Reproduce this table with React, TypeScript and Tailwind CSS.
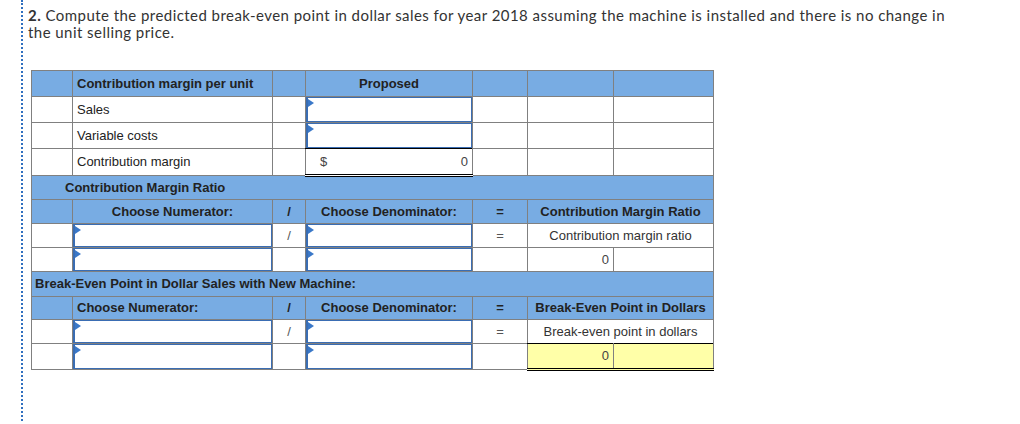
import type { ReactNode } from "react";

const cell = "border border-[#808080] p-0 align-middle";
const head = "bg-[#78ace3]";

function Entry() {
  return (
    <div className="relative h-full w-full border border-l-2 border-[#3a6db3] bg-white">
      <span className="absolute left-0 top-[1px] h-0 w-0 border-y-[4px] border-l-[6px] border-y-transparent border-l-[#3a78c8]" />
    </div>
  );
}

function Td({
  children,
  className = "",
  colSpan,
}: {
  children?: ReactNode;
  className?: string;
  colSpan?: number;
}) {
  return (
    <td colSpan={colSpan} className={`${cell} ${className}`}>
      {children}
    </td>
  );
}

export default function App() {
  return (
    <div className="h-[424px] bg-white pl-[21px] font-['Liberation_Sans',Arial,sans-serif] text-[13px] text-[#222]">
      <div className="h-[421px] border-l-2 border-dotted border-[#2f6fbf] pl-[5px]">
        <p className="whitespace-nowrap pt-[7px] font-['Lato',sans-serif] text-[15px] leading-[17px] tracking-[0.45px] text-[#333]">
          <b>2.</b> Compute the predicted break-even point in dollar sales for year 2018 assuming the machine is installed and there is no change in
          <br />
          the unit selling price.
        </p>

        <table className="ml-[3px] mt-[29px] table-fixed border-collapse">
          <colgroup>
            <col className="w-[41px]" />
            <col className="w-[200px]" />
            <col className="w-[33px]" />
            <col className="w-[167px]" />
            <col className="w-[55px]" />
            <col className="w-[86px]" />
            <col className="w-[100px]" />
          </colgroup>
          <tbody>
            <tr className={`h-[26px] ${head}`}>
              <Td />
              <Td className="px-[4px] font-bold">Contribution margin per unit</Td>
              <Td />
              <Td className="text-center font-bold">Proposed</Td>
              <Td />
              <Td />
              <Td />
            </tr>
            <tr className="h-[26px]">
              <Td />
              <Td className="px-[4px]">Sales</Td>
              <Td />
              <Td className="h-[26px]"><Entry /></Td>
              <Td />
              <Td />
              <Td />
            </tr>
            <tr className="h-[26px]">
              <Td />
              <Td className="px-[4px]">Variable costs</Td>
              <Td />
              <Td className="h-[26px]"><Entry /></Td>
              <Td />
              <Td />
              <Td />
            </tr>
            <tr className="h-[27px]">
              <Td />
              <Td className="px-[4px]">Contribution margin</Td>
              <Td />
              <Td className="border-t-black border-b-[3px] border-b-black border-double px-[4px] text-[#444]">
                <div className="flex justify-between pl-[10px]">
                  <span>$</span>
                  <span>0</span>
                </div>
              </Td>
              <Td />
              <Td />
              <Td />
            </tr>

            <tr className={`h-[24px] ${head}`}>
              <Td colSpan={7} className="pl-[33px] font-bold">Contribution Margin Ratio</Td>
            </tr>
            <tr className={`h-[24px] ${head}`}>
              <Td />
              <Td className="text-center font-bold">Choose Numerator:</Td>
              <Td className="text-center font-bold">/</Td>
              <Td className="text-center font-bold">Choose Denominator:</Td>
              <Td className="text-center font-bold">=</Td>
              <Td colSpan={2} className="text-center font-bold">Contribution Margin Ratio</Td>
            </tr>
            <tr className="h-[24px]">
              <Td />
              <Td className="h-[24px]"><Entry /></Td>
              <Td className="text-center text-[#555]">/</Td>
              <Td className="h-[24px]"><Entry /></Td>
              <Td className="text-center text-[#555]">=</Td>
              <Td colSpan={2} className="text-center text-[#333]">Contribution margin ratio</Td>
            </tr>
            <tr className="h-[24px]">
              <Td />
              <Td className="h-[24px]"><Entry /></Td>
              <Td />
              <Td className="h-[24px]"><Entry /></Td>
              <Td />
              <Td className="pr-[4px] text-right text-[#444]">0</Td>
              <Td />
            </tr>

            <tr className={`h-[25px] ${head}`}>
              <Td colSpan={7} className="pl-[3px] font-bold">Break-Even Point in Dollar Sales with New Machine:</Td>
            </tr>
            <tr className={`h-[23px] ${head}`}>
              <Td />
              <Td className="px-[4px] font-bold">Choose Numerator:</Td>
              <Td className="text-center font-bold">/</Td>
              <Td className="text-center font-bold">Choose Denominator:</Td>
              <Td className="text-center font-bold">=</Td>
              <Td colSpan={2} className="text-center font-bold">Break-Even Point in Dollars</Td>
            </tr>
            <tr className="h-[24px]">
              <Td />
              <Td className="h-[24px]"><Entry /></Td>
              <Td className="text-center text-[#555]">/</Td>
              <Td className="h-[24px]"><Entry /></Td>
              <Td className="text-center text-[#555]">=</Td>
              <Td colSpan={2} className="text-center text-[#333]">Break-even point in dollars</Td>
            </tr>
            <tr className="h-[26px]">
              <Td />
              <Td className="h-[26px]"><Entry /></Td>
              <Td />
              <Td className="h-[26px]"><Entry /></Td>
              <Td />
              <Td className="border-t-black border-b-[3px] border-b-black border-double bg-[#ffffa8] pr-[4px] text-right text-[#444]">0</Td>
              <Td className="border-t-black border-b-[3px] border-b-black border-double bg-[#ffffa8]" />
            </tr>
          </tbody>
        </table>
      </div>
    </div>
  );
}
